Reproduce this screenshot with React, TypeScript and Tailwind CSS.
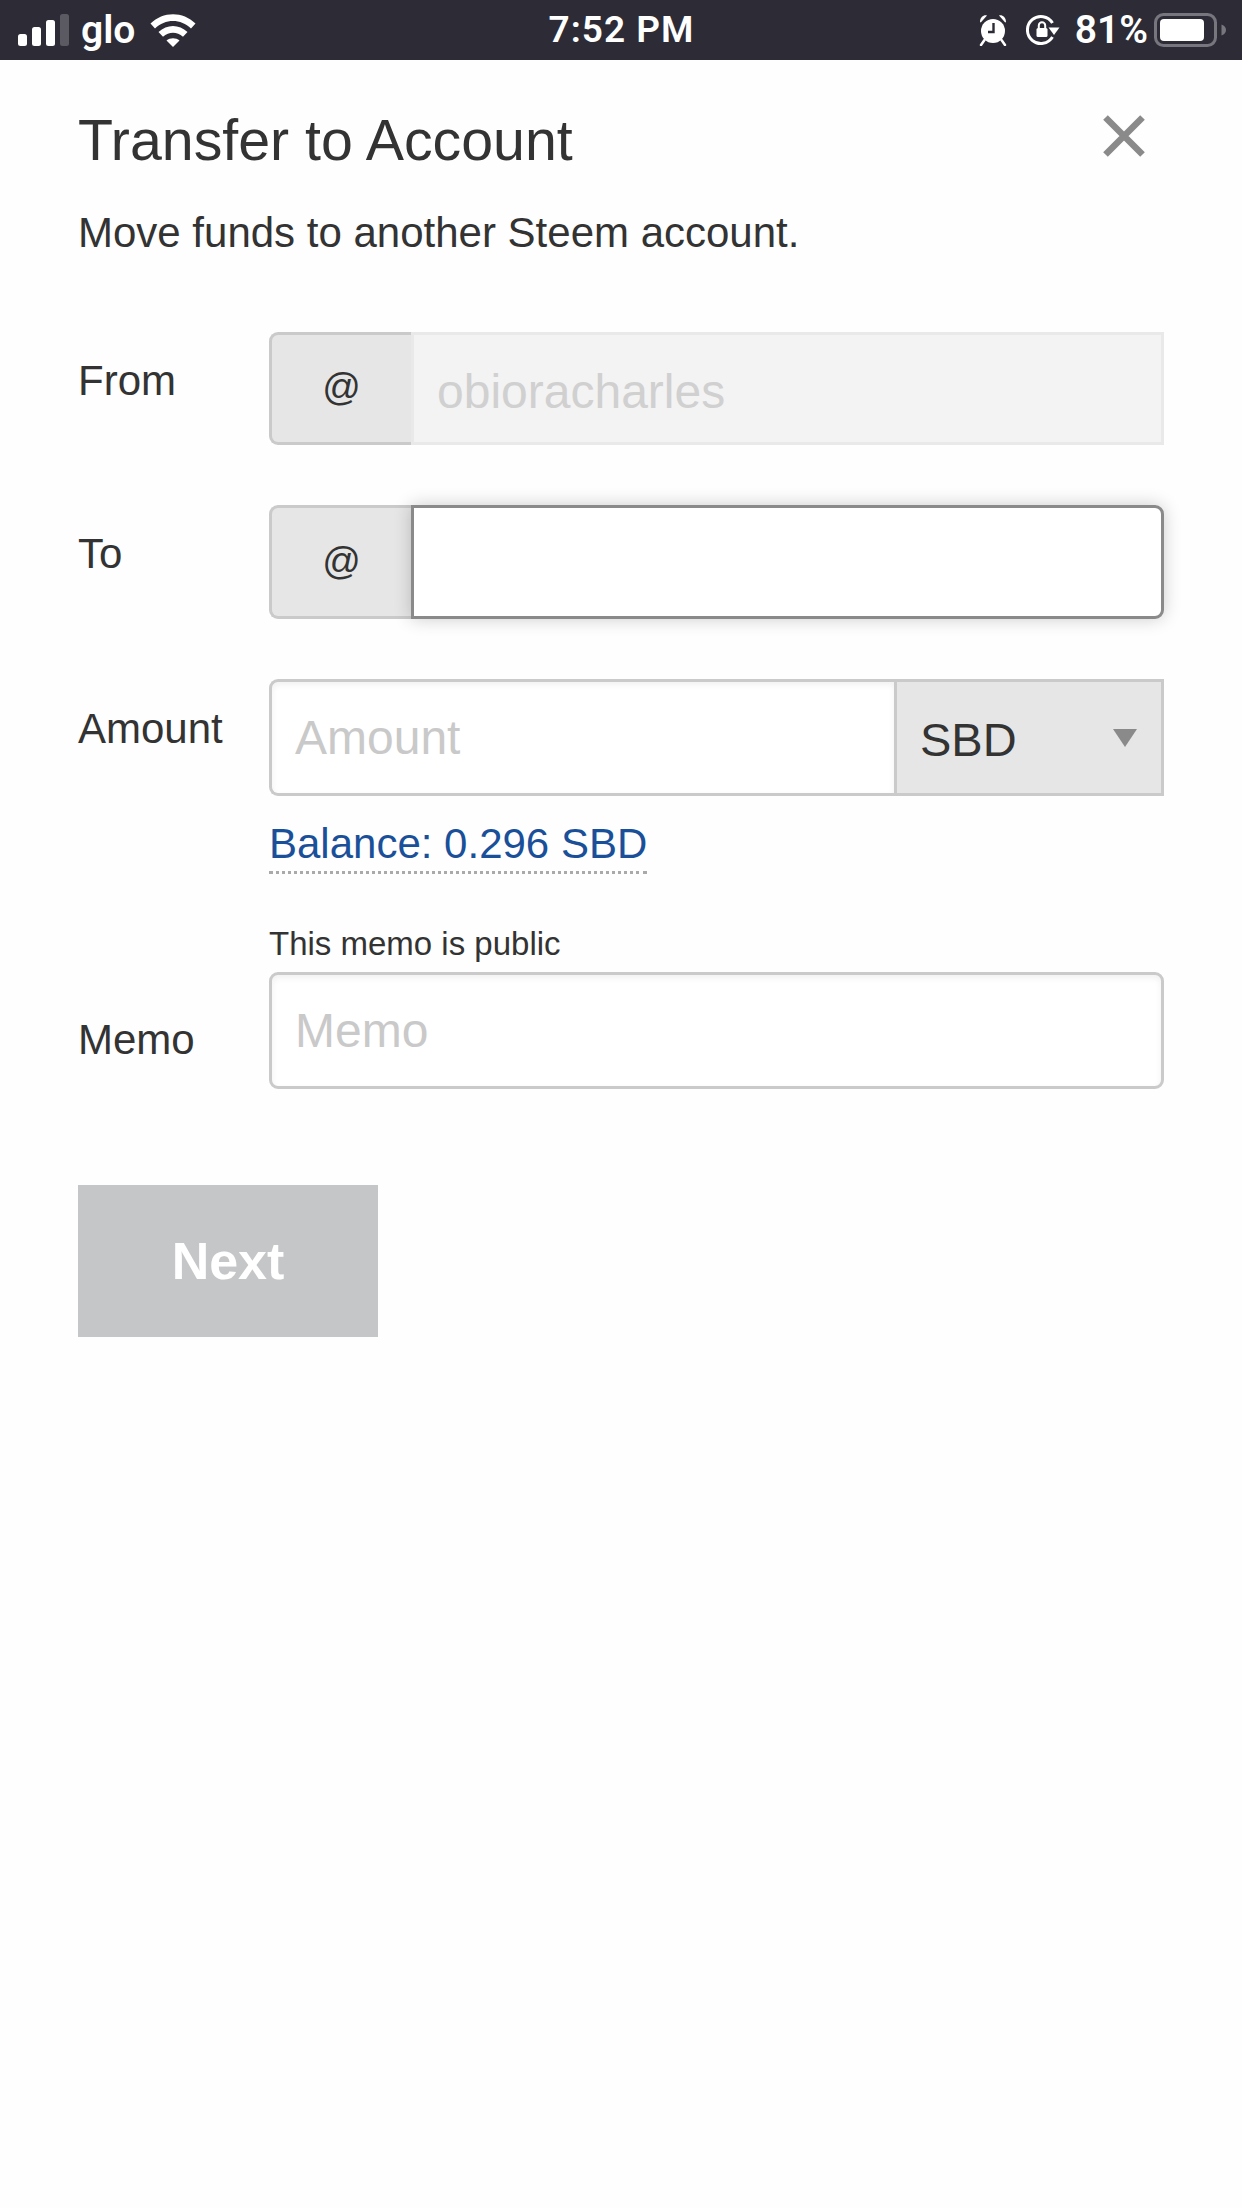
import React from "react";

const sans = "font-['Liberation_Sans',Arial,sans-serif]";

function Signal() {
  return (
    <svg width="52" height="33" viewBox="0 0 52 33" className="block">
      <rect x="0" y="20" width="9" height="12" rx="2.5" fill="#fff" />
      <rect x="14" y="13" width="9" height="19" rx="2.5" fill="#fff" />
      <rect x="28" y="6" width="9" height="26" rx="2.5" fill="#fff" />
      <rect x="42" y="0" width="9" height="32" rx="2.5" fill="#5b5a62" />
    </svg>
  );
}

function Wifi() {
  return (
    <svg width="46" height="33" viewBox="0 0 46 33" className="block">
      <path d="M0.5 9.5C13 -3 33 -3 45.5 9.5L41 14.5C31 4.5 15 4.5 5 14.5Z" fill="#fff" />
      <path d="M8.5 18C17 10 29 10 37.5 18L33 22.8C27 17.5 19 17.5 13 22.8Z" fill="#fff" />
      <path d="M16.5 26.5C20 23.5 26 23.5 29.5 26.5L23 33Z" fill="#fff" />
    </svg>
  );
}

function Alarm() {
  return (
    <svg width="28" height="32" viewBox="0 0 28 32" className="block">
      <circle cx="14" cy="17" r="12" fill="#fff" />
      <path d="M1 8C1 3 5 0.5 8 1.5L1.8 8.5Z M27 8C27 3 23 0.5 20 1.5L26.2 8.5Z" fill="#fff" />
      <path d="M5.5 26L2 31M22.5 26L26 31" stroke="#fff" strokeWidth="2.5" strokeLinecap="round" />
      <path d="M14.5 9V18H9" stroke="#2d2c36" strokeWidth="2.4" fill="none" />
    </svg>
  );
}

function RotationLock() {
  return (
    <svg width="34" height="32" viewBox="0 0 34 32" className="block">
      <path d="M26.5 9A13.5 13.5 0 1 0 26.5 23" stroke="#fff" strokeWidth="3" fill="none" />
      <path d="M22.5 13.5H33.5L28 21Z" fill="#fff" />
      <rect x="10.5" y="14" width="11" height="9" rx="1.5" fill="#fff" />
      <path d="M12.8 14V11.5A3.2 3.2 0 0 1 19.2 11.5V14" stroke="#fff" strokeWidth="2" fill="none" />
    </svg>
  );
}

function Battery() {
  return (
    <svg width="73" height="34" viewBox="0 0 73 34" className="block">
      <rect x="1.5" y="1.5" width="60" height="31" rx="8" stroke="#77767e" strokeWidth="3" fill="none" />
      <rect x="6" y="6" width="44" height="22" rx="4" fill="#fff" />
      <path d="M67.5 11.5C70.5 12.5 72 14.5 72 17C72 19.5 70.5 21.5 67.5 22.5Z" fill="#77767e" />
    </svg>
  );
}

function Close() {
  return (
    <svg width="42" height="42" viewBox="0 0 42 42" className="block">
      <path d="M2.5 2.5L39.5 39.5M39.5 2.5L2.5 39.5" stroke="#8a8a8a" strokeWidth="6.5" />
    </svg>
  );
}

function Prefix() {
  return (
    <div className="flex w-[142px] shrink-0 items-center justify-center rounded-l-[9px] border-[3px] border-r-0 border-[#cacaca] bg-[#e6e6e6] pb-[2px] text-[38px] text-[#333]">
      @
    </div>
  );
}

export default function App() {
  return (
    <div className={`${sans} flex h-[2208px] w-[1242px] flex-col bg-[#fefefe] text-[#333]`}>
      <div className="flex h-[60px] shrink-0 items-center justify-between bg-[#2d2c36] pl-[18px] pr-[15px] text-white">
        <div className="flex w-[300px] items-center">
          <Signal />
          <span className="ml-[11px] font-['Roboto',sans-serif] text-[39px] font-semibold leading-[60px]">glo</span>
          <span className="ml-[15px]"><Wifi /></span>
        </div>
        <span className="mr-[2px] font-['Roboto',sans-serif] text-[37px] font-semibold leading-[60px] tracking-[1px]">7:52 PM</span>
        <div className="flex w-[300px] items-center justify-end">
          <Alarm />
          <span className="ml-[19px]"><RotationLock /></span>
          <span className="ml-[15px] font-['Roboto',sans-serif] text-[39px] font-semibold leading-[60px]">81%</span>
          <span className="ml-[6px]"><Battery /></span>
        </div>
      </div>

      <div className="flex grow flex-col pl-[78px] pr-[78px]">
        <div className="mt-[40px] flex items-start justify-between">
          <h1 className="text-[57.3px] font-normal leading-[80px]">Transfer to Account</h1>
          <button className="mr-[19px] mt-[15px]"><Close /></button>
        </div>
        <p className="mt-[28px] text-[42px] leading-[50px]">Move funds to another Steem account.</p>

        <div className="mt-[74px] flex h-[113px]">
          <label className="w-[191px] shrink-0 pt-[24px] text-[42px] leading-[50px]">From</label>
          <div className="flex grow">
            <Prefix />
            <div className="flex grow items-center border-[3px] border-[#e9e9e9] bg-[#f3f3f3] pl-[23px] pt-[7px] text-[48px] text-[#d0d0d0]">obioracharles</div>
          </div>
        </div>

        <div className="mt-[60px] flex h-[114px]">
          <label className="w-[191px] shrink-0 pt-[24px] text-[42px] leading-[50px]">To</label>
          <div className="flex grow">
            <Prefix />
            <div className="grow rounded-r-[9px] border-[3px] border-[#8a8a8a] bg-white shadow-[0_0_18px_rgba(0,0,0,0.2)]"></div>
          </div>
        </div>

        <div className="mt-[60px] flex h-[117px]">
          <label className="w-[191px] shrink-0 pt-[25px] text-[42px] leading-[50px]">Amount</label>
          <div className="flex grow">
            <div className="flex grow items-center rounded-l-[9px] border-[3px] border-r-0 border-[#cacaca] bg-white pl-[23px] text-[48px] text-[#c9c9c9] shadow-[inset_0_3px_6px_rgba(0,0,0,0.06)]">Amount</div>
            <div className="flex w-[270px] shrink-0 items-center justify-between border-[3px] border-[#cacaca] bg-[#e6e6e6] pl-[23px] pr-[24px] text-[47px] text-[#333]">
              <span className="pt-[5px]">SBD</span>
              <svg width="24" height="18" viewBox="0 0 24 18" className="block"><path d="M0 0H24L12 18Z" fill="#8a8a8a" /></svg>
            </div>
          </div>
        </div>

        <div className="ml-[191px] mt-[23px] self-start border-b-[3px] border-dotted border-[#aaa] pb-[2px] text-[42px] leading-[50px] text-[#1a5099]">
          Balance: 0.296 SBD
        </div>

        <div className="mt-[45px] flex">
          <label className="w-[191px] shrink-0 self-end pb-[24px] text-[42px] leading-[50px]">Memo</label>
          <div className="flex grow flex-col">
            <p className="text-[33px] leading-[50px]">This memo is public</p>
            <div className="mt-[3px] flex h-[117px] items-center rounded-[9px] border-[3px] border-[#cacaca] bg-white pl-[23px] text-[48px] text-[#c9c9c9] shadow-[inset_0_3px_6px_rgba(0,0,0,0.06)]">Memo</div>
          </div>
        </div>

        <button className="mt-[96px] h-[152px] w-[300px] bg-[#c5c6c8] text-[52px] font-bold text-white">Next</button>
      </div>
    </div>
  );
}
